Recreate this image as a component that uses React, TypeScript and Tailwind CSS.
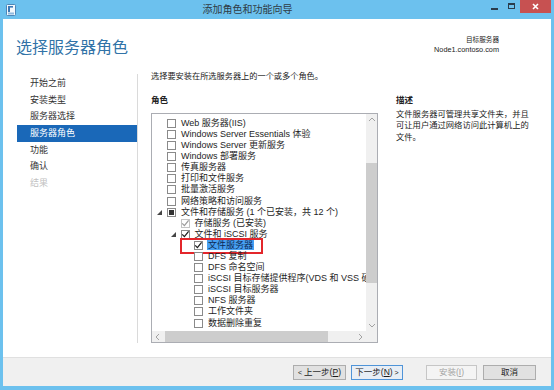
import React from 'react';

// --- TYPES ---
type CheckState = 'none' | 'checked' | 'partial' | 'installed';

interface RoleRow {
  label: string;
  level: 0 | 1 | 2;
  expander?: boolean;
  state: CheckState;
  selected?: boolean;
}

const NAV_ITEMS = [
  { label: '开始之前', state: 'normal' },
  { label: '安装类型', state: 'normal' },
  { label: '服务器选择', state: 'normal' },
  { label: '服务器角色', state: 'active' },
  { label: '功能', state: 'normal' },
  { label: '确认', state: 'normal' },
  { label: '结果', state: 'disabled' },
];

const ROWS: RoleRow[] = [
  { label: 'Web 服务器(IIS)', level: 0, state: 'none' },
  { label: 'Windows Server Essentials 体验', level: 0, state: 'none' },
  { label: 'Windows Server 更新服务', level: 0, state: 'none' },
  { label: 'Windows 部署服务', level: 0, state: 'none' },
  { label: '传真服务器', level: 0, state: 'none' },
  { label: '打印和文件服务', level: 0, state: 'none' },
  { label: '批量激活服务', level: 0, state: 'none' },
  { label: '网络策略和访问服务', level: 0, state: 'none' },
  { label: '文件和存储服务 (1 个已安装，共 12 个)', level: 0, expander: true, state: 'partial' },
  { label: '存储服务 (已安装)', level: 1, state: 'installed' },
  { label: '文件和 iSCSI 服务', level: 1, expander: true, state: 'checked' },
  { label: '文件服务器', level: 2, state: 'checked', selected: true },
  { label: 'DFS 复制', level: 2, state: 'none' },
  { label: 'DFS 命名空间', level: 2, state: 'none' },
  { label: 'iSCSI 目标存储提供程序(VDS 和 VSS 硬件提供程序)', level: 2, state: 'none' },
  { label: 'iSCSI 目标服务器', level: 2, state: 'none' },
  { label: 'NFS 服务器', level: 2, state: 'none' },
  { label: '工作文件夹', level: 2, state: 'none' },
  { label: '数据删除重复', level: 2, state: 'none' },
];

const INDENT = ['pl-[4px]', 'pl-[17.5px]', 'pl-[31px]'];

// --- SMALL PIECES ---
function CheckBox({ state }: { state: CheckState }) {
  const border = state === 'installed' ? 'border-[#c4c4c4]' : 'border-[#8a8a8a]';
  return (
    <span className={`w-[9px] h-[9px] shrink-0 border ${border} bg-white flex items-center justify-center`}>
      {state === 'partial' && <span className="w-[5px] h-[5px] bg-[#333]" />}
      {(state === 'checked' || state === 'installed') && (
        <svg width="9" height="9" viewBox="0 0 9 9" className="overflow-visible">
          <path
            d="M1.2 4.4 L3.4 6.6 L7.6 1.4"
            fill="none"
            stroke={state === 'installed' ? '#9c9c9c' : '#1f1f1f'}
            strokeWidth="1.3"
          />
        </svg>
      )}
    </span>
  );
}

function Expander() {
  return (
    <svg width="5" height="5" viewBox="0 0 5 5">
      <polygon points="5,0 5,5 0,5" fill="#454545" />
    </svg>
  );
}

function Chevron({ dir }: { dir: 'up' | 'down' | 'left' | 'right' }) {
  const d = {
    up: 'M1 5 L4 2 L7 5',
    down: 'M1 2 L4 5 L7 2',
    left: 'M5 1 L2 4 L5 7',
    right: 'M2 1 L5 4 L2 7',
  }[dir];
  return (
    <svg width="8" height="8" viewBox="0 0 8 8">
      <path d={d} fill="none" stroke="#a2a2a2" strokeWidth="1" />
    </svg>
  );
}

function WizardButton({ children, variant = 'normal' }: { children: React.ReactNode; variant?: 'normal' | 'focus' | 'disabled' }) {
  const styles = {
    normal: 'bg-[#e1e1e1] border-[#adadad] text-[#1a1a1a]',
    focus: 'bg-[#e8eef5] border-[#4f94d8] text-[#1a1a1a]',
    disabled: 'bg-[#f4f4f4] border-[#c6c6c6] text-[#a3a3a3]',
  }[variant];
  return (
    <div className={`h-[15px] border flex items-center justify-center text-[8.5px] leading-none ${styles}`}>
      {children}
    </div>
  );
}

// --- MAIN ---
export default function App() {
  return (
    <div className="w-[554px] h-[390px] bg-[#6cc1ee] flex flex-col font-['Liberation_Sans','Noto_Sans_CJK_SC',sans-serif] overflow-hidden">
      {/* Title bar */}
      <div className="h-[19px] flex items-start relative">
        <div className="w-[20px] h-[19px] flex items-center justify-center pl-[2px]">
          <svg width="12" height="12" viewBox="0 0 12 12">
            <rect x="1.5" y="0.5" width="9" height="11" rx="1" fill="#f3f8fc" stroke="#4d86b8" />
            <rect x="3" y="2" width="2" height="6" fill="#3b78b5" />
            <rect x="3" y="2" width="5" height="1.6" fill="#3b78b5" />
            <rect x="3" y="8.5" width="6" height="2" fill="#8fb9df" />
          </svg>
        </div>
        <div className="flex-1 h-[19px] flex items-center justify-center text-[10px] text-[#2f3b44] pr-[10px]">
          添加角色和功能向导
        </div>
        <div className="flex items-start h-[19px]">
          <div className="w-[18px] h-[14px] flex items-center justify-center">
            <span className="w-[7px] h-[2px] bg-[#2a3c4c] mt-[3px]" />
          </div>
          <div className="w-[16px] h-[14px] flex items-center justify-center">
            <span className="w-[7px] h-[6px] border border-[#2a3c4c] border-t-2 -mt-[3px]" />
          </div>
          <div className="w-[31px] h-[13px] bg-[#c75151] ml-[1px] mr-[3px] flex items-center justify-center">
            <svg width="7" height="7" viewBox="0 0 7 7">
              <path d="M1 1 L6 6 M6 1 L1 6" stroke="#fff" strokeWidth="1.6" />
            </svg>
          </div>
        </div>
      </div>

      {/* Window body */}
      <div className="mx-[3px] flex-1 bg-white flex flex-col">
        {/* Header */}
        <div className="h-[51px] flex justify-between">
          <div className="pl-[13px] pt-[19px] text-[16px] leading-[20px] text-[#3173a7]">选择服务器角色</div>
          <div className="pr-[52px] pt-[16px] flex flex-col items-end text-[#222]">
            <div className="text-[6.6px] leading-[9px]">目标服务器</div>
            <div className="text-[7.3px] leading-[11px]">Node1.contoso.com</div>
          </div>
        </div>

        {/* Content */}
        <div className="h-[273px] flex">
          {/* Nav */}
          <div className="w-[135px] pl-[14px] pt-[4px] flex">
            <div className="w-[121px] border-r border-[#dadada] pt-[1.7px]">
              {NAV_ITEMS.map(item => (
                <div
                  key={item.label}
                  className={`h-[16.6px] pl-[13px] flex items-center text-[9px] ${
                    item.state === 'active'
                      ? 'bg-[#1a68b8] text-white'
                      : item.state === 'disabled'
                      ? 'text-[#c2c2c2]'
                      : 'text-[#333]'
                  }`}
                >
                  {item.label}
                </div>
              ))}
            </div>
          </div>

          {/* Main */}
          <div className="flex-1 pl-[13px] pt-[1px] flex flex-col">
            <div className="h-[12px] leading-[12px] text-[8.2px] text-[#222]">选择要安装在所选服务器上的一个或多个角色。</div>
            <div className="flex mt-[11px]">
              {/* Roles */}
              <div className="w-[227px] flex flex-col">
                <div className="h-[12px] leading-[12px] text-[8.5px] font-bold text-[#222]">角色</div>
                <div className="mt-[7px] w-[227px] h-[230px] border border-[#abadb3] flex flex-col">
                  <div className="flex flex-1 min-h-0">
                    <div className="flex-1 overflow-hidden pt-[3.8px]">
                      {ROWS.map((row, i) => (
                        <div
                          key={i}
                          className={`relative h-[11.1px] flex items-center whitespace-nowrap text-[9px] text-[#1e1e1e] ${INDENT[row.level]}`}
                        >
                          <span className="w-[11px] h-[11px] shrink-0 flex items-center justify-start pl-[1px]">
                            {row.expander && <Expander />}
                          </span>
                          <CheckBox state={row.state} />
                          {row.selected ? (
                            <span className="ml-[4px] px-[1px] bg-[#47a0f2] text-[#0d2a55] leading-[10px]">{row.label}</span>
                          ) : (
                            <span className="ml-[5px] leading-[11px]">{row.label}</span>
                          )}
                          {row.selected && (
                            <span className="absolute left-[28px] top-[-2px] w-[83px] h-[16px] border-2 border-[#e3262b]" />
                          )}
                        </div>
                      ))}
                    </div>
                    {/* vertical scrollbar */}
                    <div className="w-[11px] bg-[#f0f0f0] flex flex-col">
                      <div className="h-[11px] flex items-center justify-center">
                        <Chevron dir="up" />
                      </div>
                      <div className="flex-1 pt-[38px]">
                        <div className="h-[120px] bg-[#cdcdcd]" />
                      </div>
                      <div className="h-[11px] flex items-center justify-center">
                        <Chevron dir="down" />
                      </div>
                    </div>
                  </div>
                  {/* horizontal scrollbar */}
                  <div className="h-[11px] flex">
                    <div className="flex-1 bg-[#f0f0f0] flex items-center">
                      <div className="w-[11px] h-[11px] flex items-center justify-center">
                        <Chevron dir="left" />
                      </div>
                      <div className="ml-[2px] w-[163px] h-[11px] bg-[#cdcdcd]" />
                      <div className="flex-1" />
                      <div className="w-[11px] h-[11px] flex items-center justify-center">
                        <Chevron dir="right" />
                      </div>
                    </div>
                    <div className="w-[11px] bg-[#f0f0f0]" />
                  </div>
                </div>
              </div>

              {/* Description */}
              <div className="ml-[18px] w-[140px] flex flex-col text-[#222]">
                <div className="h-[12px] leading-[12px] text-[8.5px] font-bold">描述</div>
                <div className="mt-[2.8px] text-[8.3px] leading-[11.5px]">
                  文件服务器可管理共享文件夹，并且可让用户通过网络访问此计算机上的文件。
                </div>
              </div>
            </div>
          </div>
        </div>

        <div className="h-[14px]" />

        {/* Footer */}
        <div className="h-[29px] bg-[#f0f0f0] border-t border-[#e0e0e0] flex justify-end pr-[15px] pt-[7px]">
          <div className="w-[53px]">
            <WizardButton>
              <span className="text-[7px] mr-[2px]">&lt;</span>上一步(<span className="underline">P</span>)
            </WizardButton>
          </div>
          <div className="w-[52px] ml-[5px]">
            <WizardButton variant="focus">
              下一步(<span className="underline">N</span>)<span className="text-[7px] ml-[2px]">&gt;</span>
            </WizardButton>
          </div>
          <div className="w-[51px] ml-[23px]">
            <WizardButton variant="disabled">
              安装(<span className="underline">I</span>)
            </WizardButton>
          </div>
          <div className="w-[53px] ml-[6px]">
            <WizardButton>取消</WizardButton>
          </div>
        </div>
      </div>
      <div className="h-[4px]" />
    </div>
  );
}
